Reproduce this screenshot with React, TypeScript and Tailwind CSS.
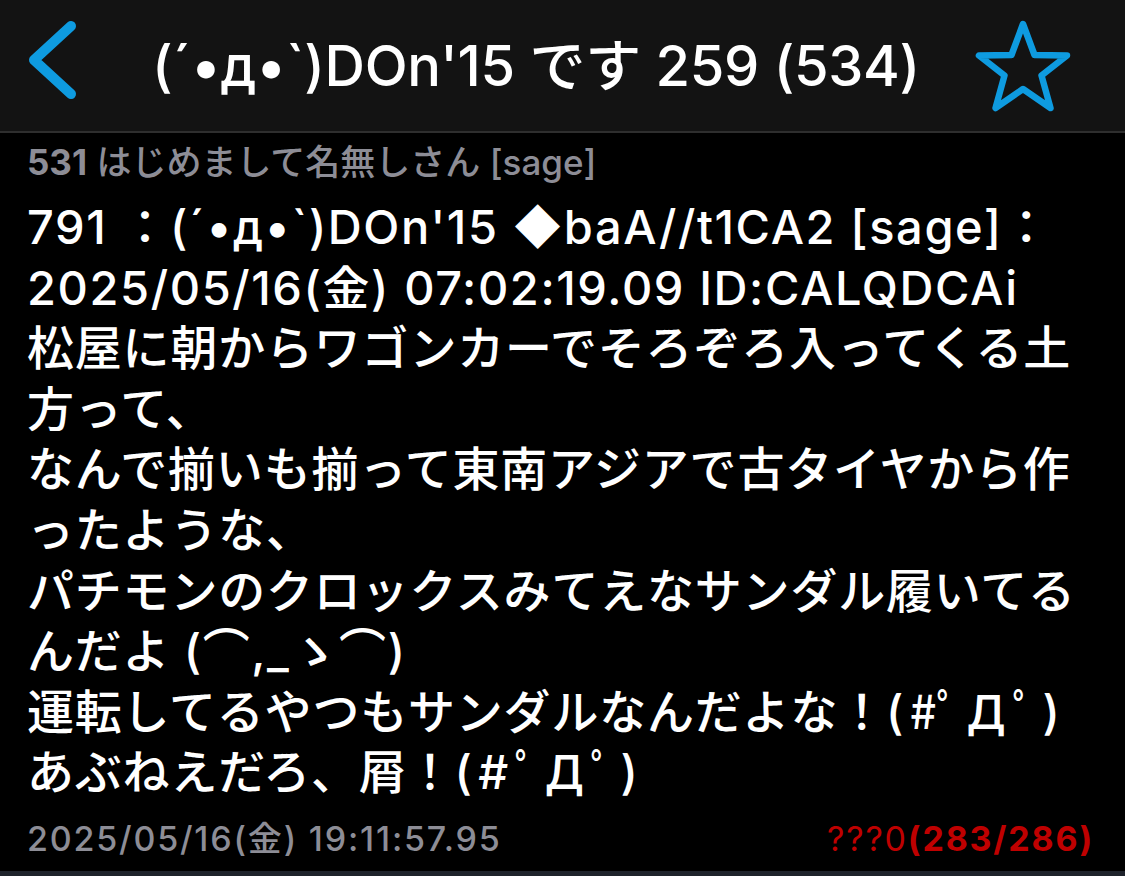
const font = "font-['Inter','Noto_Sans_CJK_JP',sans-serif]";

// [text, kind] — "wide" and "kao" runs get extra letter spacing so the Latin runs match the reference widths
const lines: [string, string?][][] = [
  [["791 ：(´•д•`)DOn'15 ◆baA//t1CA2 [sage]：", "wide"]],
  [["2025/05/16(金) 07:02:19.09 ID:CALQDCAi", "wide"]],
  [["松屋に朝からワゴンカーでそろぞろ入ってくる土"]],
  [["方って、"]],
  [["なんで揃いも揃って東南アジアで古タイヤから作"]],
  [["ったような、"]],
  [["パチモンのクロックスみてえなサンダル履いてる"]],
  [["んだよ "], ["(⌒,_ゝ⌒)", "wide"]],
  [["運転してるやつもサンダルなんだよな！"], ["(#ﾟДﾟ)", "kao"]],
  [["あぶねえだろ、屑！"], ["(#ﾟДﾟ)", "kao"]],
];

const Back = () => (
  <svg viewBox="0 0 60 90" className="w-[60px] h-[90px]" fill="none" stroke="#0e9be0" strokeWidth="10" strokeLinecap="round" strokeLinejoin="round">
    <polyline points="46,8 9,42 46,76" />
  </svg>
);

const Star = () => (
  <svg viewBox="0 0 100 100" className="w-[102px] h-[100px]" fill="none" stroke="#0e9be0" strokeWidth="6.5" strokeLinejoin="round">
    <path d="M50 6 L61.5 37 L94 37.5 L68.5 57.5 L77.5 90 L50 71 L22.5 90 L31.5 57.5 L6 37.5 L38.5 37 Z" />
  </svg>
);

export default function App() {
  return (
    <div className={`w-[1125px] h-[876px] bg-black text-white overflow-hidden flex flex-col ${font}`}>
      <header className="h-[133px] shrink-0 bg-[#131313] border-b-2 border-[#2e2e2e] flex items-center">
        <div className="w-[100px] pl-[25px] flex items-center -mt-[5px]">
          <Back />
        </div>
        <h1 className="flex-1 text-center text-[56px] font-medium tracking-[-0.3px] whitespace-nowrap">
          (´•д•`)DOn'15 です 259 (534)
        </h1>
        <div className="w-[153px] flex items-center mt-[4px]">
          <Star />
        </div>
      </header>

      <main className="flex-1 flex flex-col px-[27px]">
        <div className="pt-[7px] text-[35px] text-[#8d8d96] font-medium leading-[44px] whitespace-nowrap">
          <span className="font-bold">531</span> はじめまして名無しさん [sage]
        </div>
        <div className="mt-[13px] text-[47px] font-medium leading-[60.6px] tracking-[0.8px]">
          {lines.map((segs, i) => (
            <div key={i} className="whitespace-nowrap">
              {segs.map(([t, kind], j) => (
                <span
                  key={j}
                  className={kind === "wide" ? "tracking-[1.6px]" : kind === "kao" ? "tracking-[6.5px]" : ""}
                >
                  {t}
                </span>
              ))}
            </div>
          ))}
        </div>
        <div className="mt-[13px] flex items-center justify-between leading-[46px] text-[34px] tracking-[1.8px] whitespace-nowrap">
          <span className="text-[#8d8d96] font-medium">2025/05/16(金) 19:11:57.95</span>
          <span className="text-[#bf0000] mr-[4px]">
            ???0<span className="font-bold">(283/286)</span>
          </span>
        </div>
      </main>
      <div className="h-[5px] bg-[#1e232b] shrink-0" />
    </div>
  );
}
